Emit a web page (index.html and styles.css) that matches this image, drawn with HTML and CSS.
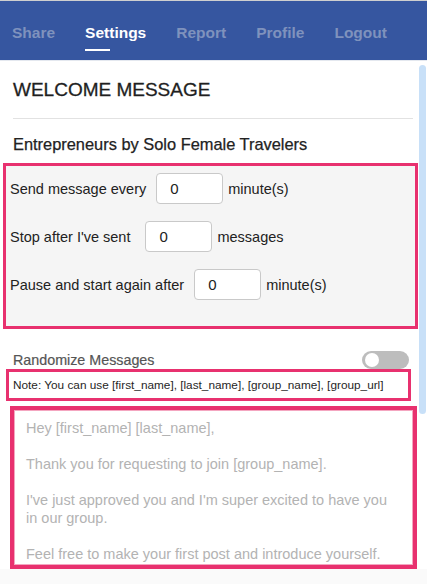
FILE: index.html
```html
<!DOCTYPE html>
<html>
<head>
<meta charset="utf-8">
<link rel="stylesheet" href="styles.css">
</head>
<body>
<div class="app">
  <nav class="nav">
    <a class="tab">Share</a>
    <a class="tab active">Settings</a>
    <a class="tab">Report</a>
    <a class="tab">Profile</a>
    <a class="tab">Logout</a>
  </nav>
  <main class="content">
    <h1 class="title">WELCOME MESSAGE</h1>
    <hr class="divider">
    <h2 class="group">Entrepreneurs by Solo Female Travelers</h2>
    <div class="timing">
      <div class="row"><span class="label">Send message every</span><span class="input">0</span><span class="unit">minute(s)</span></div>
      <div class="row"><span class="label label-wide">Stop after I've sent</span><span class="input">0</span><span class="unit">messages</span></div>
      <div class="row"><span class="label">Pause and start again after</span><span class="input">0</span><span class="unit">minute(s)</span></div>
    </div>
    <div class="random">
      <span class="random-label">Randomize Messages</span>
      <span class="toggle"></span>
    </div>
    <div class="note">Note: You can use [first_name], [last_name], [group_name], [group_url]</div>
    <div class="message">Hey [first_name] [last_name],

Thank you for requesting to join [group_name].

I've just approved you and I'm super excited to have you in our group.

Feel free to make your first post and introduce yourself.</div>
    <div class="footer"><div class="button"></div></div>
  </main>
  <div class="scrollbar"></div>
</div>
</body>
</html>
```
FILE: styles.css
```css
html, body {
  margin: 0;
  padding: 0;
  background: #ffffff;
}
body {
  font-family: "Liberation Sans", Arial, sans-serif;
  color: #222222;
  width: 427px;
  height: 584px;
  overflow: hidden;
}
.app {
  position: relative;
  border-top: 1px solid #cfcfcf;
}
.nav {
  display: flex;
  align-items: flex-start;
  gap: 30px;
  height: 60px;
  box-sizing: border-box;
  padding: 22px 0 0 12px;
  background: #3656a0;
  border-bottom: 1px solid #e4e8ef;
}
.tab {
  font-size: 15.5px;
  font-weight: 700;
  line-height: 20px;
  color: #7f92bd;
  display: flex;
  flex-direction: column;
}
.tab.active {
  color: #ffffff;
}
.tab.active::after {
  content: "";
  display: block;
  width: 25px;
  height: 2px;
  margin-top: 6px;
  background: #ffffff;
}
.title {
  margin: 16px 14px 0 13px;
  font-size: 19px;
  line-height: 26px;
  font-weight: 400;
  color: #1f1f1f;
  -webkit-text-stroke: 0.3px #1f1f1f;
}
.divider {
  margin: 15px 14px 0 13px;
  border: 0;
  border-top: 1px solid #e2e2e2;
}
.group {
  margin: 14px 14px 0 13px;
  font-size: 16.4px;
  line-height: 22px;
  font-weight: 400;
  color: #222222;
  -webkit-text-stroke: 0.25px #222222;
}
.timing {
  margin: 8px 9px 0 3px;
  border: 3px solid #e8316f;
  background: #f5f5f5;
  padding: 7px 0 26px 4px;
  display: flex;
  flex-direction: column;
  gap: 17px;
}
.row {
  display: flex;
  align-items: center;
  height: 31px;
  font-size: 14.5px;
}
.label {
  margin-right: 10px;
}
.label-wide {
  margin-right: 15px;
}
.input {
  box-sizing: border-box;
  width: 67px;
  height: 31px;
  background: #ffffff;
  border: 1px solid #c9c9c9;
  border-radius: 4px;
  padding: 5px 0 0 13px;
  font-size: 15px;
  line-height: 20px;
  margin-right: 5px;
}
.random {
  display: flex;
  justify-content: space-between;
  align-items: center;
  margin: 22px 18px 0 13px;
  height: 18px;
}
.random-label {
  font-size: 14.3px;
  color: #555555;
  -webkit-text-stroke: 0.2px #555555;
}
.toggle {
  position: relative;
  width: 47px;
  height: 18px;
  border-radius: 9px;
  background: #bdbdbd;
}
.toggle::before {
  content: "";
  position: absolute;
  left: 3px;
  top: 2px;
  width: 14px;
  height: 14px;
  border-radius: 50%;
  background: #ffffff;
}
.note {
  margin: 0 16px 0 6px;
  border: 3px solid #e8316f;
  padding: 5px 4px;
  font-size: 11.8px;
  line-height: 16px;
  color: #1f1f1f;
  white-space: nowrap;
}
.message {
  margin: 5px 10px 0 10px;
  border: 4px solid #e8316f;
  box-shadow: inset 0 0 0 1px #f4a6c0;
  padding: 9px 22px 3px 12px;
  font-size: 14.5px;
  line-height: 18px;
  color: #b3b3b3;
  white-space: pre-line;
  height: 163px;
  box-sizing: border-box;
  overflow: hidden;
}
.footer {
  padding: 16px 15px 0 15px;
  background: #fafafa;
  height: 30px;
}
.button {
  height: 20px;
  background: #3656a0;
  border-radius: 2px 2px 0 0;
}
.scrollbar {
  position: absolute;
  right: 1px;
  top: 64px;
  width: 7px;
  height: 349px;
  border-radius: 4px;
  background: #c8e0f8;
}
```
